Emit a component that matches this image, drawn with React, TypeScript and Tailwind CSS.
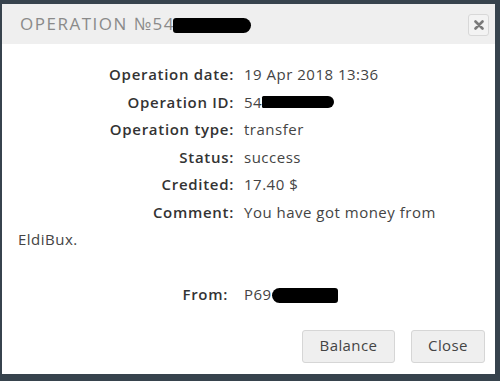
import React from 'react'

const rows = [
    { label: 'Operation date:', value: '19 Apr 2018 13:36' },
    { label: 'Operation ID:', value: '54', redact: true },
    { label: 'Operation type:', value: 'transfer' },
    { label: 'Status:', value: 'success' },
    { label: 'Credited:', value: '17.40 $' },
    { label: 'Comment:', value: 'You have got money from EldiBux.' },
]

function Blot({ className }: { className: string }) {
    return <span className={`inline-block bg-black align-middle ${className}`}></span>
}

export default function App() {
    return (
        <div className="w-[500px] h-[381px] bg-[#37434d] pt-[4px] pl-[2px] pr-[5px] pb-[7px]" style={{ fontFamily: '"Open Sans", "Liberation Sans", sans-serif' }}>
            <div className="h-full bg-white flex flex-col">
                <div className="h-[40px] bg-[#efefef] flex items-center justify-between pl-[18px] pr-[6px]">
                    <div className="flex items-center text-[17px] tracking-[1.5px] text-[#8a8a8a]">
                        <span>OPERATION №54</span>
                        <Blot className="w-[78px] h-[15px] rounded-r-[10px] rounded-l-[4px] -ml-[2px] mt-[2px]" />
                    </div>
                    <button className="w-[21px] h-[22px] rounded-[3px] border border-[#d8d8d8] bg-[#f3f3f3] flex items-center justify-center mt-[2px]">
                        <svg width="10" height="10" viewBox="0 0 10 10">
                            <path d="M1.5 1.5 L8.5 8.5 M8.5 1.5 L1.5 8.5" stroke="#7a7a7a" strokeWidth="2.6" strokeLinecap="round" />
                        </svg>
                    </button>
                </div>
                <div className="flex-1 pt-[17px] pl-[16px] pr-[18px] text-[15px] leading-[27.5px] text-[#3a3a3a]">
                    {rows.map((r) => (
                        <div key={r.label}>
                            <span className="inline-block w-[216px] text-right text-[#333] font-semibold tracking-[0.7px]">{r.label}</span>
                            <span className="ml-[10px] text-[#444] tracking-[0.5px]">{r.value}</span>
                            {r.redact && <Blot className="w-[72px] h-[12px] rounded-r-[8px] rounded-l-[2px] -mt-[2px]" />}
                        </div>
                    ))}
                    <div className="mt-[27.5px]">
                        <span className="inline-block w-[210px] text-right text-[#333] font-semibold tracking-[0.7px]">From:</span>
                        <span className="ml-[16px] text-[#444] tracking-[0.5px]">P69</span>
                        <Blot className="w-[66px] h-[15px] rounded-r-[4px] rounded-l-[10px] -mt-[1px]" />
                    </div>
                    <div className="flex justify-end gap-[16px] mt-[21px] mr-[-8px]">
                        <button className="w-[93px] h-[33px] rounded-[3px] border border-[#d6d6d6] bg-[#efefef] text-[15px] text-[#444] tracking-[0.4px]">Balance</button>
                        <button className="w-[74px] h-[33px] rounded-[3px] border border-[#d6d6d6] bg-[#efefef] text-[15px] text-[#444] tracking-[0.4px]">Close</button>
                    </div>
                </div>
            </div>
        </div>
    )
}
